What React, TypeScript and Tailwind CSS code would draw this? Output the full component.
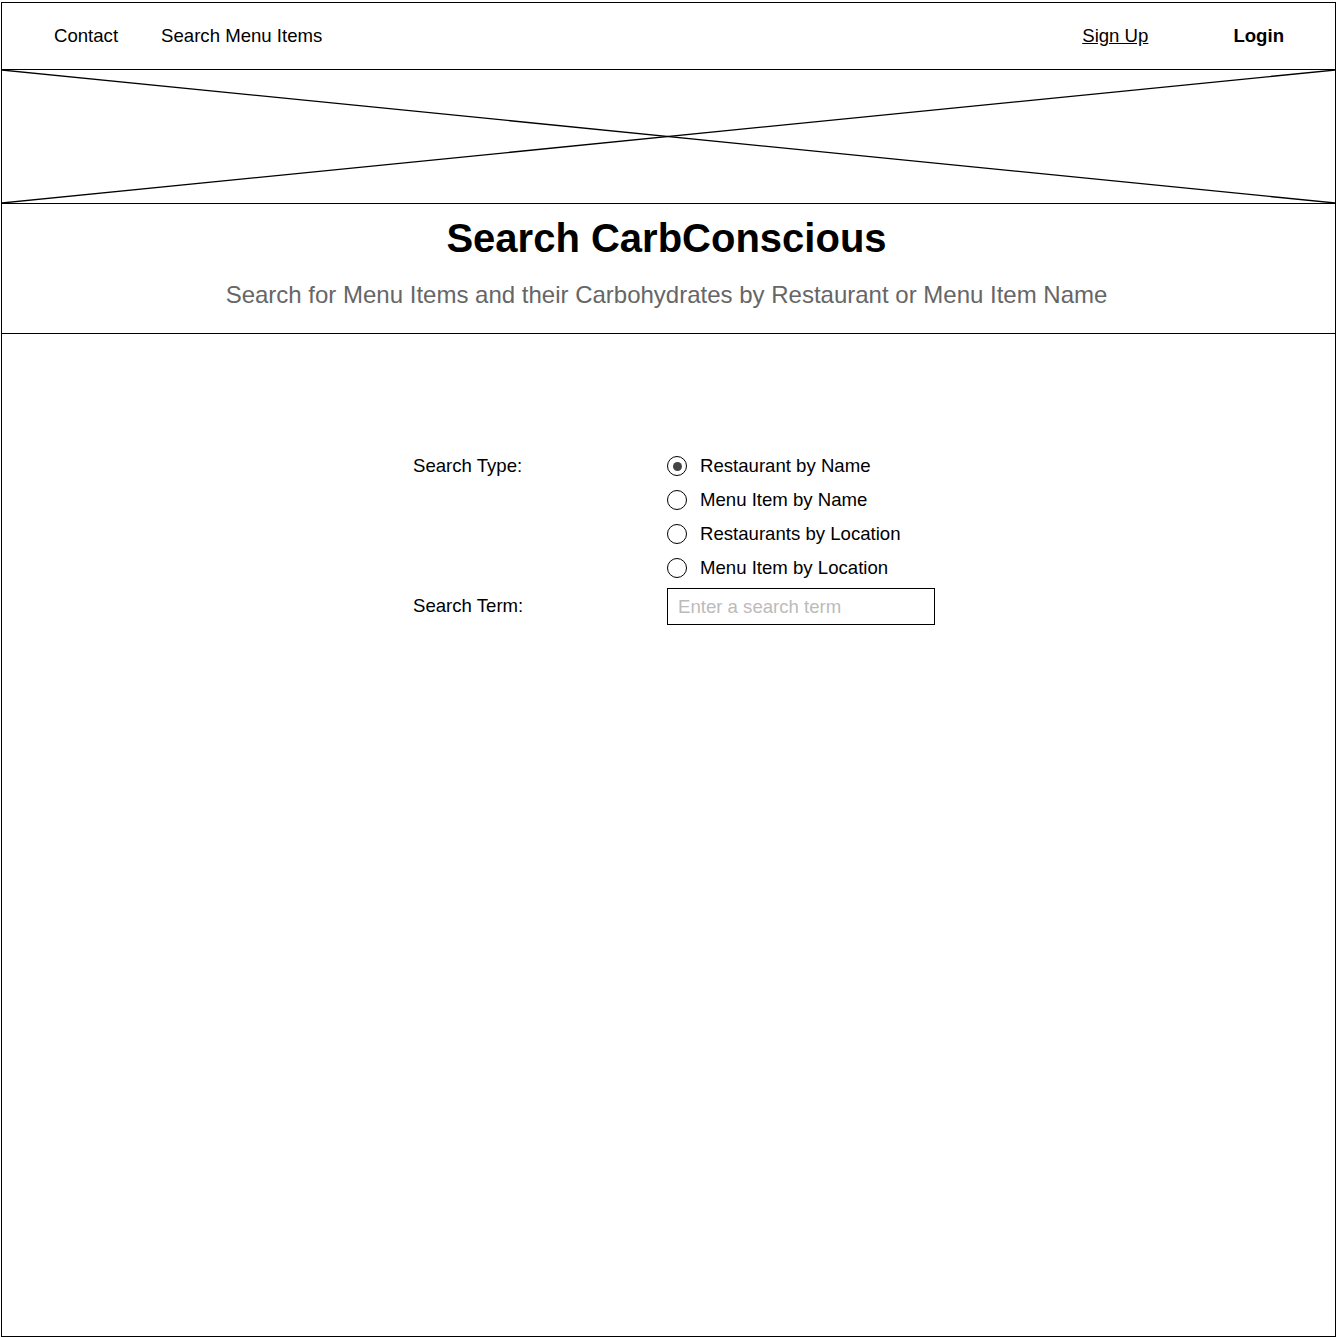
import React from "react";

const options = [
  "Restaurant by Name",
  "Menu Item by Name",
  "Restaurants by Location",
  "Menu Item by Location",
];

function Radio({ checked }: { checked?: boolean }) {
  return (
    <span className="flex h-[20px] w-[20px] shrink-0 items-center justify-center rounded-full border-[1.5px] border-black bg-white">
      {checked && <span className="h-[9px] w-[9px] rounded-full bg-[#444444]" />}
    </span>
  );
}

export default function App() {
  return (
    <div className="min-h-[1338px] w-[1338px] bg-white font-['Liberation_Sans',Arial,sans-serif] text-[18.6px] text-black">
      <div className="ml-[1px] mt-[2px] flex h-[1335px] w-[1335px] flex-col border border-black">
        {/* Header */}
        <div className="flex h-[67px] shrink-0 items-center border-b border-black">
          <span className="ml-[52px]">Contact</span>
          <span className="ml-[43px]">Search Menu Items</span>
          <span className="ml-auto underline">Sign Up</span>
          <span className="ml-[85px] mr-[51px] font-bold">Login</span>
        </div>
        {/* Image placeholder */}
        <div className="h-[134px] shrink-0 border-b border-black">
          <svg className="block h-full w-full" viewBox="0 0 1333 133" preserveAspectRatio="none">
            <line x1="0" y1="0" x2="1333" y2="133" stroke="black" strokeWidth="1.3" vectorEffect="non-scaling-stroke" />
            <line x1="0" y1="133" x2="1333" y2="0" stroke="black" strokeWidth="1.3" vectorEffect="non-scaling-stroke" />
          </svg>
        </div>
        {/* Title */}
        <div className="flex h-[130px] shrink-0 flex-col items-center border-b border-black">
          <h1 className="mr-[4px] mt-[10px] text-[40px] font-bold leading-[48px]">Search CarbConscious</h1>
          <p className="mr-[4px] mt-[19px] text-[24px] leading-[28px] text-[#666666]">
            Search for Menu Items and their Carbohydrates by Restaurant or Menu Item Name
          </p>
        </div>
        {/* Form */}
        <div className="flex flex-col pt-[115px]">
          <div className="flex">
            <div className="ml-[411px] w-[254px] leading-[34px]">Search Type:</div>
            <div className="flex flex-col">
              {options.map((o, i) => (
                <label key={o} className="flex h-[34px] items-center gap-[13px]">
                  <Radio checked={i === 0} />
                  <span>{o}</span>
                </label>
              ))}
            </div>
          </div>
          <div className="mt-[3px] flex items-center">
            <div className="ml-[411px] w-[254px] pb-[2px]">Search Term:</div>
            <div className="flex h-[37px] w-[268px] items-center border border-black px-[10px] text-[#bbbbbb]">
              Enter a search term
            </div>
          </div>
        </div>
      </div>
    </div>
  );
}
